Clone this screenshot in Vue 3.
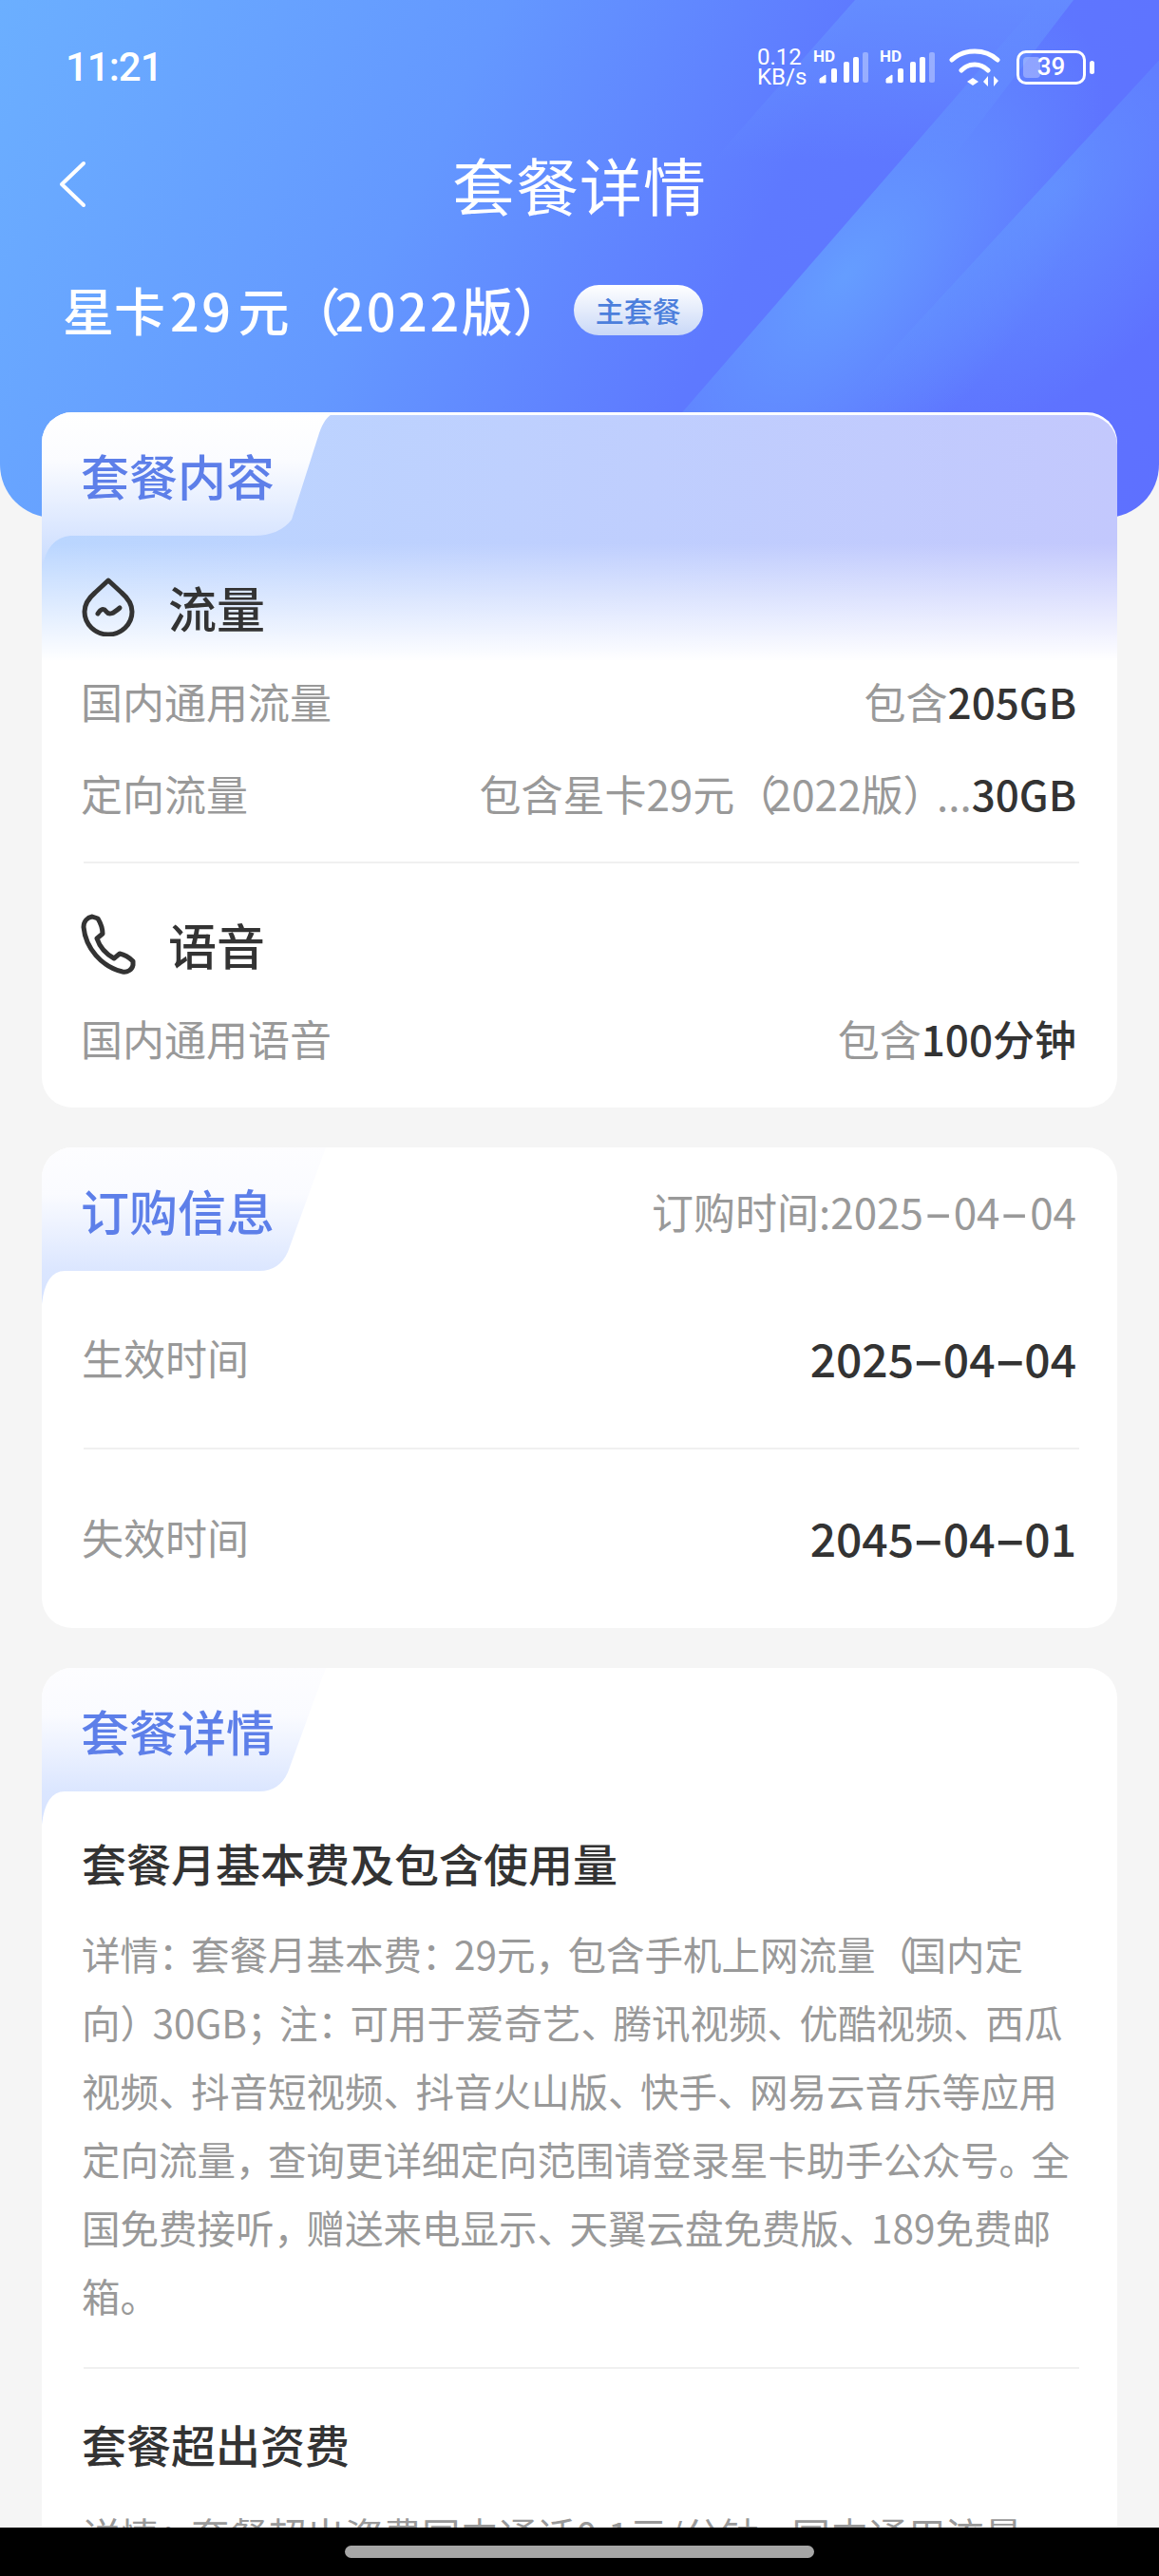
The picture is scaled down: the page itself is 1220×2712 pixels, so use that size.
<script setup>
const usage = [
  { label: '国内通用流量', prefix: '包含', value: '205GB' },
  { label: '定向流量', prefix: '包含星卡29元（2022版）...', value: '30GB' },
]
const dates = [
  { label: '生效时间', value: '2025-04-04' },
  { label: '失效时间', value: '2045-04-01' },
]
const feeLines = [
  '详情：套餐月基本费：29元，包含手机上网流量（国内定',
  '向）30GB；注：可用于爱奇艺、腾讯视频、优酷视频、西瓜',
  '视频、抖音短视频、抖音火山版、快手、网易云音乐等应用',
  '定向流量，查询更详细定向范围请登录星卡助手公众号。全',
  '国免费接听，赠送来电显示、天翼云盘免费版、189免费邮',
  '箱。',
]
const overLines = ['详情：套餐超出资费国内通话0.1元/分钟，国内通用流量']

// odd indexes are the separators, they get tighter spacing
const splitMarks = (line) => line.split(/([：，、；。（）])/)
const splitDash = (text) => text.split(/(-)/)
</script>

<template>
  <div class="page">
    <header class="hero">
      <svg class="hero__streaks" viewBox="0 0 1220 545" preserveAspectRatio="none">
        <defs>
          <linearGradient id="band-a" gradientUnits="userSpaceOnUse" x1="0" y1="0" x2="0" y2="170">
            <stop offset="0" stop-color="#6a9fff" stop-opacity=".5" />
            <stop offset="1" stop-color="#6a9fff" stop-opacity="0" />
          </linearGradient>
          <radialGradient id="band-b" gradientUnits="userSpaceOnUse" cx="890" cy="290" r="360"
            gradientTransform="translate(890 290) rotate(-49) scale(1 .5) translate(-890 -290)">
            <stop offset="0" stop-color="#659dff" stop-opacity="1" />
            <stop offset="1" stop-color="#659dff" stop-opacity="0" />
          </radialGradient>
          <radialGradient id="band-c" gradientUnits="userSpaceOnUse" cx="1110" cy="200" r="300"
            gradientTransform="translate(1110 200) rotate(-49) scale(1 .6) translate(-1110 -200)">
            <stop offset="0" stop-color="#659dff" stop-opacity=".6" />
            <stop offset="1" stop-color="#659dff" stop-opacity="0" />
          </radialGradient>
        </defs>
        <path d="M900 0L750 170H1000L1130 0Z" fill="url(#band-a)" />
        <path d="M1100 -6L700 455L1000 600L1400 200Z" fill="url(#band-b)" />
        <path d="M1260 20L800 520H1400V20Z" fill="url(#band-c)" />
      </svg>

      <div class="status">
        <span class="status__time">11:21</span>
        <div class="status__icons">
          <span class="status__speed"><span>0.12</span><span>KB/s</span></span>
          <svg v-for="n in 2" :key="n" class="status__signal" width="58" height="40" viewBox="0 0 58 40">
            <text x="0" y="14" class="status__hd">HD</text>
            <path d="M7 36V32L13 28V36Z" fill="#fff" stroke="#fff" stroke-linejoin="round" />
            <rect x="19" y="21" width="6" height="15" rx="2" fill="#fff" />
            <rect x="32" y="14" width="6" height="22" rx="2" fill="#fff" />
            <rect x="42" y="9" width="6" height="27" rx="2" fill="#fff" />
            <rect x="52" y="4" width="6" height="32" rx="2" fill="#fff" opacity=".35" />
          </svg>
          <svg class="status__wifi" width="54" height="40" viewBox="0 0 54 40" fill="none" stroke="#fff" stroke-width="5" stroke-linecap="round">
            <path d="M3 12C16 0 38 0 51 12" />
            <path d="M13 23C21 15 33 15 41 23" />
            <path d="M19 35L25 31L31 35L25 39Z" fill="#fff" stroke="none" />
            <path d="M41 29V40L36 35ZM47 40V29L52 34Z" fill="#fff" stroke="none" />
          </svg>
          <div class="status__battery">
            <span class="status__level"></span>
            <span class="status__num">39</span>
          </div>
          <span class="status__cap"></span>
        </div>
      </div>

      <div class="nav">
        <svg class="nav__back" width="30" height="50" viewBox="0 0 30 50" fill="none" stroke="#fff" stroke-width="4" stroke-linecap="round" stroke-linejoin="round">
          <path d="M27 3L4 25L27 47" />
        </svg>
        <h1 class="nav__title">套餐详情</h1>
      </div>

      <div class="plan">
        <span class="plan__name">星卡<i class="plan__num plan__num--pad">29</i>元<i class="plan__paren">（</i><i class="plan__num">2022</i>版）</span>
        <span class="plan__tag">主套餐</span>
      </div>
    </header>

    <main class="cards">
      <section class="card card--content">
        <div class="tab tab--first"><span>套餐内容</span></div>
        <div class="group group--data">
          <div class="group__head">
            <svg width="58" height="62" viewBox="0 0 58 62" fill="none" stroke="#333" stroke-width="5" stroke-linecap="round" stroke-linejoin="round">
              <path d="M29 3L43 16C50 22 54 29 54 36A25 24 0 0 1 4 36C4 29 8 22 15 16Z" />
              <path d="M18 38C21 33 24 32 27 36C30 40 34 38 41 32" />
            </svg>
            <span>流量</span>
          </div>
          <div v-for="row in usage" :key="row.label" class="row">
            <span class="row__label">{{ row.label }}</span>
            <span class="row__value"><span class="row__prefix"><template v-for="(part, i) in splitMarks(row.prefix)" :key="i"><i v-if="i % 2" class="row__mark">{{ part }}</i><template v-else>{{ part }}</template></template></span>{{ row.value }}</span>
          </div>
        </div>
        <div class="group group--voice">
          <div class="group__head">
            <svg width="58" height="64" viewBox="0 0 58 64" fill="none" stroke="#333" stroke-width="5" stroke-linecap="round" stroke-linejoin="round">
              <path d="M12 3L18 5C21 10 23 16 23 21L17 26C20 35 26 42 35 47L41 42C46 43 51 46 55 50L55 54C54 59 49 62 44 61C22 56 5 36 3 14C3 8 7 4 12 3Z" />
            </svg>
            <span>语音</span>
          </div>
          <div class="row">
            <span class="row__label">国内通用语音</span>
            <span class="row__value"><span class="row__prefix">包含</span>100分钟</span>
          </div>
        </div>
      </section>

      <section class="card card--order">
        <div class="tab-line">
          <div class="tab"><span>订购信息</span></div>
          <span class="tab-line__time">订购时间:<template v-for="(part, i) in splitDash('2025-04-04')" :key="i"><i v-if="i % 2" class="dash">{{ part }}</i><template v-else>{{ part }}</template></template></span>
        </div>
        <div v-for="item in dates" :key="item.label" class="date">
          <span class="row__label">{{ item.label }}</span>
          <b><template v-for="(part, i) in splitDash(item.value)" :key="i"><i v-if="i % 2" class="dash">{{ part }}</i><template v-else>{{ part }}</template></template></b>
        </div>
      </section>

      <section class="card card--detail">
        <div class="tab"><span>套餐详情</span></div>
        <div class="detail detail--fee">
          <h3>套餐月基本费及包含使用量</h3>
          <p v-for="line in feeLines" :key="line"><template v-for="(part, i) in splitMarks(line)" :key="i"><i v-if="i % 2" class="mark">{{ part }}</i><template v-else>{{ part }}</template></template></p>
        </div>
        <div class="detail detail--over">
          <h3>套餐超出资费</h3>
          <p v-for="line in overLines" :key="line"><template v-for="(part, i) in splitMarks(line)" :key="i"><i v-if="i % 2" class="mark">{{ part }}</i><template v-else>{{ part }}</template></template></p>
        </div>
      </section>
    </main>

    <footer class="gesture"><span></span></footer>
  </div>
</template>

<style>
html, body { margin: 0; background: #f5f5f5; }
</style>

<style scoped>
.page {
  position: relative;
  width: 1220px;
  height: 2712px;
  overflow: hidden;
  background: #f5f5f5;
  font-family: "Noto Sans CJK SC", "Noto Sans", sans-serif;
}
.page i { font-style: normal; }
.hero {
  position: relative;
  height: 545px;
  box-sizing: border-box;
  padding: 0 66px;
  border-radius: 0 0 56px 56px;
  overflow: hidden;
  color: #fff;
  background: linear-gradient(115deg, #6bafff 0%, #6498ff 36%, #5e79ff 62%, #5e70ff 100%);
}
.hero__streaks {
  position: absolute;
  inset: 0;
  width: 100%;
  height: 100%;
}
.status {
  position: relative;
  display: flex;
  align-items: center;
  justify-content: space-between;
  height: 40px;
  padding-top: 51px;
  margin-left: 3px;
  margin-right: 2px;
}
.status__time {
  font: 500 42px/40px Roboto, sans-serif;
  letter-spacing: -1px;
}
.status__icons {
  display: flex;
  align-items: center;
}
.status__speed {
  width: 50px;
  margin-right: 9px;
  font: 400 24px/21px Roboto, sans-serif;
}
.status__speed span { display: block; }
.status__signal {
  margin-right: 12px;
  overflow: visible;
}
.status__hd {
  font: 700 17px Roboto, sans-serif;
  fill: #fff;
}
.status__wifi { margin: 0 17px 0 3px; }
.status__battery {
  position: relative;
  box-sizing: border-box;
  width: 73px;
  height: 36px;
  border: 3.5px solid #fff;
  border-radius: 10px;
}
.status__level {
  position: absolute;
  left: 4px;
  top: 4px;
  bottom: 4px;
  width: 18px;
  border-radius: 4px;
  background: rgba(255, 255, 255, .3);
}
.status__num {
  position: absolute;
  inset: 0;
  text-align: center;
  font: 500 26px/29px Roboto, sans-serif;
}
.status__cap {
  width: 5px;
  height: 14px;
  margin-left: 4px;
  border-radius: 3px;
  background: #fff;
}
.nav {
  position: relative;
  display: flex;
  align-items: center;
  justify-content: center;
  height: 90px;
  margin-top: 57px;
}
.nav__back {
  position: absolute;
  left: -5px;
  top: 21px;
}
.nav__title {
  margin: 0;
  font-size: 66px;
  font-weight: 400;
  line-height: 90px;
  letter-spacing: 1px;
}
.plan {
  position: relative;
  display: flex;
  align-items: center;
  gap: 10px;
  margin-top: 52px;
}
.plan__name {
  font-size: 54px;
  font-weight: 500;
  line-height: 72px;
}
.plan__num { letter-spacing: 2.5px; }
.plan__num--pad { margin: 0 5px; }
.plan__paren { letter-spacing: -6px; }
.plan__tag {
  padding: 0 23px;
  border-radius: 27px;
  font-size: 30px;
  font-weight: 500;
  line-height: 53px;
  color: #4c7fdc;
  background: linear-gradient(180deg, #fff, #c9d8f7);
}
.cards {
  position: absolute;
  left: 44px;
  right: 44px;
  top: 434px;
  display: flex;
  flex-direction: column;
  gap: 42px;
}
.card {
  position: relative;
  box-sizing: border-box;
  border-radius: 32px;
  overflow: hidden;
  background: #fff;
}
.card--content { height: 732px; }
.card--content::before {
  content: "";
  position: absolute;
  inset: 3px 0 auto 0;
  height: 270px;
  border-radius: 32px 32px 0 0;
  background:
    linear-gradient(180deg, rgba(255, 255, 255, 0) 50%, #fff 96%),
    linear-gradient(90deg, #bad6ff, #c3c8fd);
}
.card--order { height: 506px; }
.card--detail { height: 1000px; }
.tab {
  position: relative;
  height: 130px;
  box-sizing: border-box;
  padding-left: 41px;
  font-size: 51px;
  font-weight: 500;
  line-height: 133px;
  color: #5d7fe9;
}
.tab::before {
  content: "";
  position: absolute;
  left: 0;
  top: 0;
  width: 300px;
  height: 166px;
  background: linear-gradient(180deg, #fdfdff 0%, #fafbff 30%, #dbe6ff 78%, #d5e2ff 100%);
  clip-path: path("M0 0H299L259 110Q250 130 229 130H24Q4 130 0 165Z");
}
.tab--first::before {
  width: 310px;
  background: linear-gradient(180deg, #fff 0%, #fbfcff 30%, #d8e5ff 78%, #c6dafd 100%);
  clip-path: path("M0 0H309Q298 4 292 22L263 113Q250 130 223 130H30Q6 132 0 165Z");
}
.tab span { position: relative; }
.tab-line { position: relative; }
.tab-line__time {
  position: absolute;
  right: 43px;
  top: 37px;
  font-size: 44px;
  line-height: 60px;
  color: #999;
}
.dash {
  display: inline-block;
  width: .64em;
  text-align: center;
  font-family: Inter, sans-serif;
  transform: scaleX(1.6);
}
.tab-line__time .dash { width: .72em; }
.group {
  position: relative;
  padding: 0 43px 0 41px;
}
.group__head {
  display: flex;
  align-items: center;
  gap: 34px;
  height: 64px;
  font-size: 51px;
  font-weight: 500;
  color: #333;
}
.group--data { padding-top: 43px; padding-bottom: 44px; }
.group--data::after {
  content: "";
  position: absolute;
  left: 44px;
  right: 40px;
  bottom: 0;
  height: 2px;
  background: #f0f0f0;
}
.group--voice { padding-top: 53px; }
.row {
  display: flex;
  align-items: center;
  justify-content: space-between;
  height: 60px;
  margin-top: 37px;
  font-size: 44px;
  font-weight: 500;
  color: #333;
}
.row__label {
  font-size: 44px;
  font-weight: 400;
  color: #999;
}
.row__prefix {
  font-weight: 400;
  color: #999;
}
.row__mark { letter-spacing: -8.5px; }
.date {
  position: relative;
  display: flex;
  justify-content: space-between;
  align-items: center;
  height: 60px;
  padding: 0 43px 0 42px;
}
.date b {
  font-size: 48px;
  font-weight: 500;
  color: #333;
}
.date:nth-child(2) { margin-top: 61px; }
.date:nth-child(2)::after {
  content: "";
  position: absolute;
  left: 44px;
  right: 40px;
  bottom: -67px;
  height: 2px;
  background: #f0f0f0;
}
.date:nth-child(3) { margin-top: 129px; }
.detail {
  position: relative;
  padding: 0 42px;
}
.detail h3 {
  margin: 0 0 28px;
  font-size: 47px;
  font-weight: 500;
  line-height: 64px;
  color: #333;
}
.detail p {
  margin: 0;
  font-size: 40.5px;
  line-height: 72px;
  white-space: nowrap;
  color: #999;
}
.mark { letter-spacing: -6.5px; }
.detail--fee { padding-top: 43px; padding-bottom: 41px; }
.detail--fee::after {
  content: "";
  position: absolute;
  left: 44px;
  right: 40px;
  bottom: 0;
  height: 2px;
  background: #f0f0f0;
}
.detail--over { padding-top: 47px; }
.gesture {
  position: absolute;
  left: 0;
  right: 0;
  bottom: 0;
  height: 51px;
  display: flex;
  align-items: center;
  justify-content: center;
  background: #000;
}
.gesture span {
  width: 494px;
  height: 13px;
  border-radius: 7px;
  background: #a6a6a6;
}
</style>
